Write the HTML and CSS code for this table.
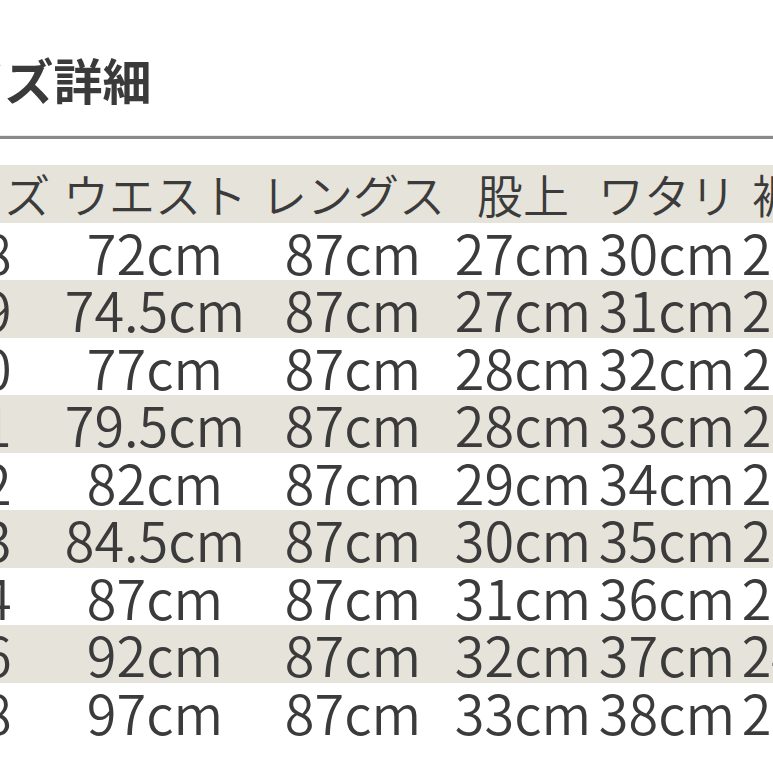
FILE: index.html
```html
<!DOCTYPE html>
<html lang="ja">
<head>
<meta charset="utf-8">
<link rel="stylesheet" href="styles.css">
</head>
<body>
<div class="page">
  <h2 class="title">サイズ詳細</h2>
  <div class="rule"></div>
  <table class="sizes">
    <colgroup>
      <col class="c1"><col class="c2"><col class="c3"><col class="c4"><col class="c5"><col class="c6">
    </colgroup>
    <thead>
      <tr><th>サイズ</th><th>ウエスト</th><th>レングス</th><th>股上</th><th>ワタリ</th><th class="wide">裾幅</th></tr>
    </thead>
    <tbody>
      <tr><td>28</td><td>72cm</td><td>87cm</td><td>27cm</td><td>30cm</td><td>20cm</td></tr>
      <tr><td>29</td><td>74.5cm</td><td>87cm</td><td>27cm</td><td>31cm</td><td>20cm</td></tr>
      <tr><td>30</td><td>77cm</td><td>87cm</td><td>28cm</td><td>32cm</td><td>21cm</td></tr>
      <tr><td>31</td><td>79.5cm</td><td>87cm</td><td>28cm</td><td>33cm</td><td>21cm</td></tr>
      <tr><td>32</td><td>82cm</td><td>87cm</td><td>29cm</td><td>34cm</td><td>22cm</td></tr>
      <tr><td>33</td><td>84.5cm</td><td>87cm</td><td>30cm</td><td>35cm</td><td>22cm</td></tr>
      <tr><td>34</td><td>87cm</td><td>87cm</td><td>31cm</td><td>36cm</td><td>23cm</td></tr>
      <tr><td>36</td><td>92cm</td><td>87cm</td><td>32cm</td><td>37cm</td><td>24cm</td></tr>
      <tr><td>38</td><td>97cm</td><td>87cm</td><td>33cm</td><td>38cm</td><td>25cm</td></tr>
    </tbody>
  </table>
</div>
</body>
</html>
```
FILE: styles.css
```css
html, body {
  margin: 0;
  padding: 0;
  background: #ffffff;
  overflow: hidden;
}
body {
  font-family: "Noto Sans CJK JP", "Noto Sans", sans-serif;
  color: #3b3b3b;
}
.page {
  margin-left: -92px;
  width: 1000px;
}
.title {
  margin: 0;
  padding: 49px 0 0 0;
  height: 80px;
  font-size: 49px;
  font-weight: 700;
  line-height: 60px;
  box-sizing: border-box;
  color: #3a3a3a;
}
.rule {
  margin-top: 55px;
  height: 3px;
  background: #8a8a8a;
  border-top: 1px solid #ececec;
}
.sizes {
  margin-top: 26px;
  border-collapse: collapse;
  table-layout: fixed;
  width: 972px;
}
.c1 { width: 148px; }
.c2 { width: 198px; }
.c3 { width: 198px; }
.c4 { width: 142px; }
.c5 { width: 146px; }
.c6 { width: 140px; }
.sizes th, .sizes td {
  padding: 0;
  text-align: center;
  vertical-align: middle;
  white-space: nowrap;
  height: 57.5px;
  line-height: 57px;
  box-sizing: border-box;
}
.sizes th {
  font-size: 46px;
  font-weight: 350;
  background: #e6e3da;
}
.sizes th.wide {
  letter-spacing: 12px;
}
.sizes td {
  font-size: 54px;
  font-weight: 350;
}
.sizes tbody tr:nth-child(even) td {
  background: #e6e3da;
}
```
